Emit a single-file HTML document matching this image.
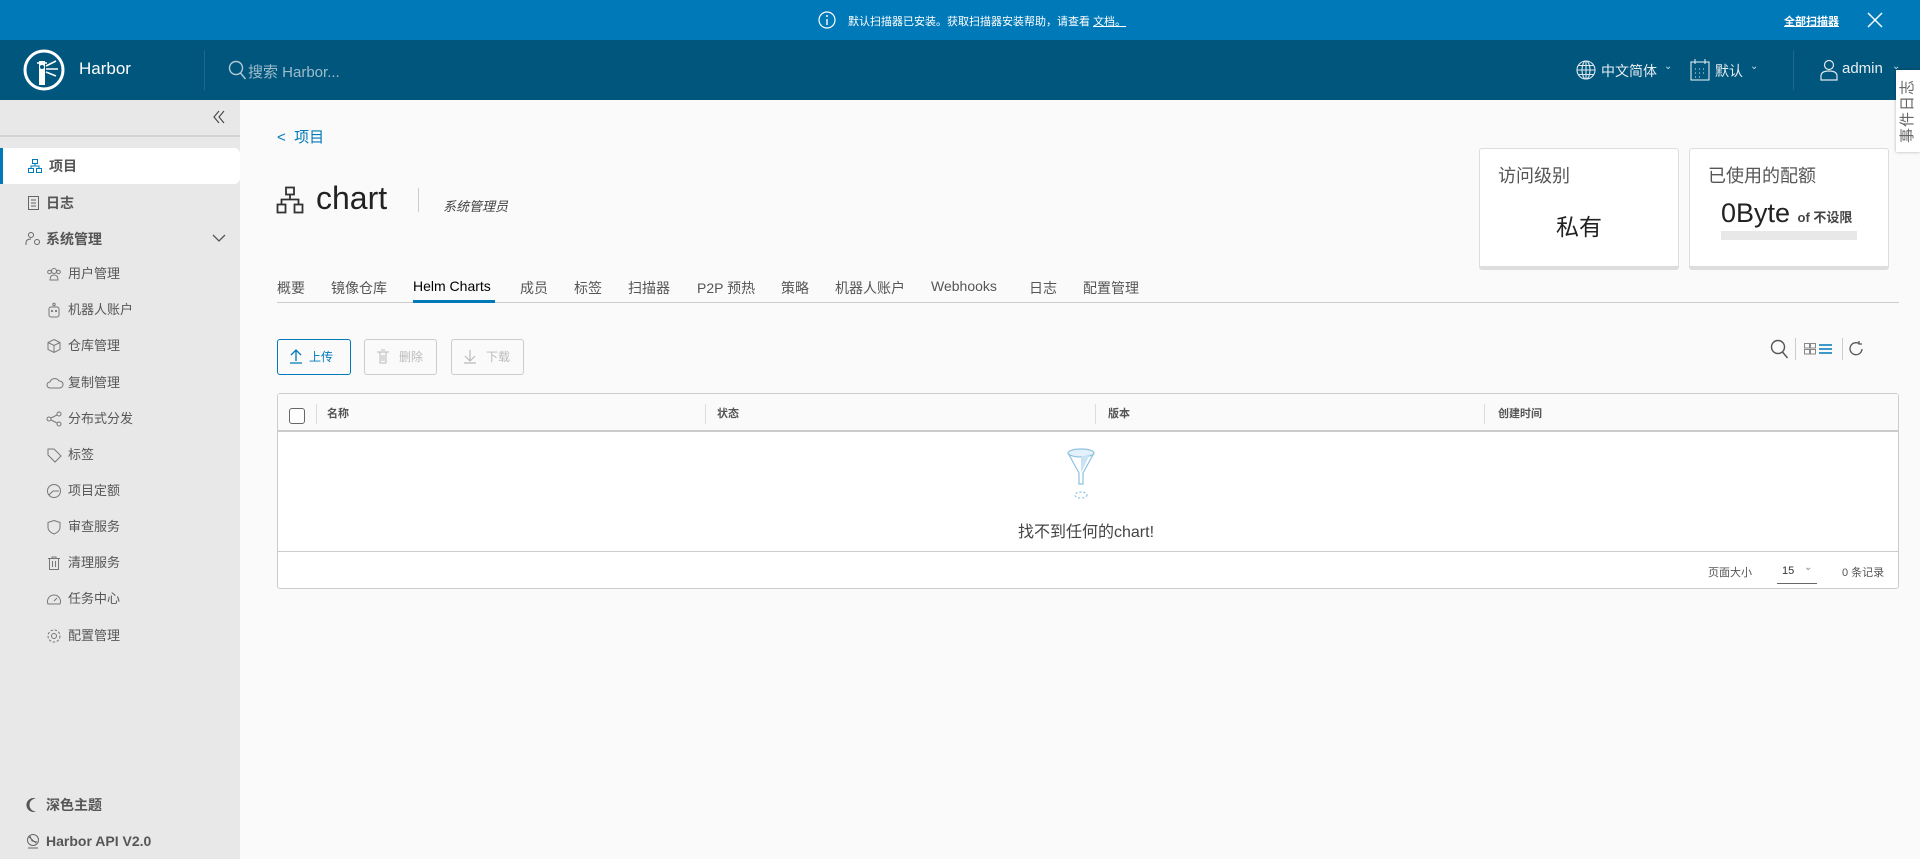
<!DOCTYPE html>
<html><head><meta charset="utf-8">
<style>
*{box-sizing:border-box;margin:0;padding:0}
body{width:1920px;height:859px;overflow:hidden;background:#fafafa;font-family:"Liberation Sans","Noto Sans CJK SC",sans-serif;color:#565656;position:relative}
.a{position:absolute;white-space:nowrap}
.banner{position:absolute;left:0;top:0;width:1920px;height:40px;background:#0079b8;color:#fff;font-size:11px}
.hdr{position:absolute;left:0;top:40px;width:1920px;height:60px;background:#00567d;color:#fff}
.side{position:absolute;left:0;top:100px;width:240px;height:759px;background:#e8e8e8}
.si{position:absolute;left:0;width:240px;height:20px;font-size:14px;color:#565656;line-height:20px}
.si svg{position:absolute;top:2px}
.tab{position:absolute;top:278px;font-size:14px;color:#565656}
.btn{position:absolute;top:339px;height:36px;border:1px solid #ccc;border-radius:3px;font-size:12px;color:#bbb;line-height:34px;padding-left:34px;background:#fafafa}
.th{position:absolute;top:405px;font-size:11px;font-weight:bold;color:#555}
.cd{position:absolute;top:404px;width:1px;height:20px;background:#ddd}
</style></head><body>

<div class="banner">
<svg class="a" style="left:818px;top:11px" width="18" height="18" viewBox="0 0 18 18"><circle cx="9" cy="9" r="8" fill="none" stroke="#fff" stroke-width="1.2"/><circle cx="9" cy="5" r="1" fill="#fff"/><path d="M9 8v6" stroke="#fff" stroke-width="1.4"/></svg>
<div class="a" style="left:848px;top:13px">默认扫描器已安装。获取扫描器安装帮助，请查看 <u>文档。</u></div>
<div class="a" style="left:1784px;top:13px;text-decoration:underline;font-weight:bold">全部扫描器</div>
<svg class="a" style="left:1866px;top:11px" width="18" height="18"><path d="M2 2L16 16M16 2L2 16" stroke="#fff" stroke-width="1.5"/></svg>
</div>

<div class="hdr">
<svg class="a" style="left:23px;top:9px" width="42" height="42" viewBox="0 0 42 42"><circle cx="21" cy="21" r="19" fill="none" stroke="#fff" stroke-width="3"/><path d="M16 12h6v24h-6z" fill="#fff"/><path d="M14 14h10M23 17l10-5M23 20h12M23 23l10 4" stroke="#fff" stroke-width="1.6"/><circle cx="19" cy="18" r="2" fill="#00567d"/></svg>
<div class="a" style="left:79px;top:19px;font-size:17px">Harbor</div>
<div class="a" style="left:204px;top:10px;width:1px;height:40px;background:#1f6a8c"></div>
<svg class="a" style="left:228px;top:20px" width="20" height="22"><circle cx="8" cy="8" r="6.5" fill="none" stroke="#b5c9d5" stroke-width="1.4"/><path d="M12.5 13l5 6" stroke="#b5c9d5" stroke-width="1.4"/></svg>
<div class="a" style="left:248px;top:21px;font-size:15px;color:#9fbccc">搜索 Harbor...</div>
<svg class="a" style="left:1576px;top:20px" width="20" height="20" viewBox="0 0 20 20" fill="none" stroke="#dfe8ee" stroke-width="1.1"><circle cx="10" cy="10" r="9"/><ellipse cx="10" cy="10" rx="4" ry="9"/><path d="M1 10h18M2.5 5.5h15M2.5 14.5h15M10 1v18"/></svg>
<div class="a" style="left:1601px;top:21px;font-size:14px;color:#e8eef2">中文简体</div>
<div class="a" style="left:1664px;top:21px;font-size:10px;color:#cfdde6">⌄</div>
<svg class="a" style="left:1690px;top:18px" width="20" height="24" fill="none" stroke="#dfe8ee" stroke-width="1.1"><rect x="1" y="4" width="18" height="18"/><path d="M5 1v5M15 1v5M5 11h1M9 11h1M13 11h1M5 15h1M9 15h1M13 15h1M5 19h1M9 19h1"/></svg>
<div class="a" style="left:1715px;top:21px;font-size:14px;color:#e8eef2">默认</div>
<div class="a" style="left:1750px;top:21px;font-size:10px;color:#cfdde6">⌄</div>
<div class="a" style="left:1793px;top:10px;width:1px;height:40px;background:#1f6a8c"></div>
<svg class="a" style="left:1820px;top:19px" width="18" height="22" fill="none" stroke="#dfe8ee" stroke-width="1.2"><circle cx="9" cy="6" r="4.5"/><path d="M1 21v-4q0-5 8-5t8 5v4z"/></svg>
<div class="a" style="left:1842px;top:20px;font-size:15px;color:#e8eef2">admin</div>
<div class="a" style="left:1892px;top:21px;font-size:10px;color:#cfdde6">⌄</div>
</div>
<div class="a" style="left:1896px;top:70px;width:24px;height:82px;background:#fff;box-shadow:0 0 3px rgba(0,0,0,.3)"></div>
<div class="a" style="left:1870px;top:101px;width:76px;height:20px;transform:rotate(-90deg);font-size:15px;color:#666;text-align:center;line-height:20px;letter-spacing:1px">事件日志</div>

<div class="side">
<svg class="a" style="left:211px;top:9px" width="16" height="16" fill="none" stroke="#444" stroke-width="1.1"><path d="M8 2L3 8l5 6M13 2L8 8l5 6"/></svg>
<div class="a" style="left:0;top:35px;width:240px;height:2px;background:#d4d4d4"></div>
<div class="a" style="left:0;top:48px;width:240px;height:36px;background:#fff;border-radius:0 6px 6px 0;border-left:3px solid #0079b8"></div>
</div>
<div class="si" style="top:156px;font-weight:bold"><svg style="left:27px" width="16" height="16" fill="none" stroke="#0079b8" stroke-width="1"><rect x="5.5" y="1.5" width="5" height="4"/><rect x="1.5" y="10.5" width="5" height="4"/><rect x="9.5" y="10.5" width="5" height="4"/><path d="M8 5.5v2.5M4 10.5V8h8v2.5"/></svg><span class="a" style="left:49px">项目</span></div>
<div class="si" style="top:193px;font-weight:bold"><svg style="left:27px" width="14" height="16" fill="none" stroke="#666" stroke-width="1"><rect x="1.5" y="1.5" width="10" height="13"/><path d="M4 5h5M4 8h5M4 11h5"/></svg><span class="a" style="left:46px">日志</span></div>
<div class="si" style="top:229px;font-weight:bold"><svg style="left:25px" width="18" height="16" fill="none" stroke="#666" stroke-width="1"><circle cx="6" cy="4" r="2.5"/><path d="M1 14v-2q0-4 5-4"/><circle cx="12" cy="11" r="2.5"/></svg><span class="a" style="left:46px">系统管理</span><svg style="left:212px;top:4px" width="14" height="10" fill="none" stroke="#555" stroke-width="1.3"><path d="M1 2l6 6 6-6"/></svg></div>
<div class="si" style="top:264px;font-size:13px"><svg style="left:46px" width="16" height="16" fill="none" stroke="#777" stroke-width="1"><circle cx="8" cy="5" r="2.5"/><circle cx="3.5" cy="6" r="1.8"/><circle cx="12.5" cy="6" r="1.8"/><path d="M4 14q0-5 4-5t4 5z"/></svg><span class="a" style="left:68px">用户管理</span></div>
<div class="si" style="top:300px;font-size:13px"><svg style="left:46px" width="16" height="16" fill="none" stroke="#777" stroke-width="1"><rect x="3" y="5" width="10" height="10" rx="2"/><circle cx="8" cy="2.5" r="1.2"/><circle cx="6" cy="9" r=".6"/><circle cx="10" cy="9" r=".6"/></svg><span class="a" style="left:68px">机器人账户</span></div>
<div class="si" style="top:336px;font-size:13px"><svg style="left:46px" width="16" height="16" fill="none" stroke="#777" stroke-width="1"><path d="M8 1.5l6 3v7l-6 3-6-3v-7zM2 4.5l6 3 6-3M8 7.5v7"/></svg><span class="a" style="left:68px">仓库管理</span></div>
<div class="si" style="top:373px;font-size:13px"><svg style="left:46px" width="18" height="16" fill="none" stroke="#777" stroke-width="1"><path d="M4 13a3 3 0 010-6 5 5 0 019-1 3.5 3.5 0 011 7z"/></svg><span class="a" style="left:68px">复制管理</span></div>
<div class="si" style="top:409px;font-size:13px"><svg style="left:46px" width="16" height="16" fill="none" stroke="#777" stroke-width="1"><circle cx="3" cy="8" r="2"/><circle cx="13" cy="3" r="2"/><circle cx="13" cy="13" r="2"/><path d="M5 7l6-3M5 9l6 3"/></svg><span class="a" style="left:68px">分布式分发</span></div>
<div class="si" style="top:445px;font-size:13px"><svg style="left:46px" width="16" height="16" fill="none" stroke="#777" stroke-width="1"><path d="M2 2h6l7 7-6 6-7-7z"/></svg><span class="a" style="left:68px">标签</span></div>
<div class="si" style="top:481px;font-size:13px"><svg style="left:46px" width="16" height="16" fill="none" stroke="#777" stroke-width="1"><circle cx="8" cy="8" r="6.5"/><path d="M3 12l4-4h6"/></svg><span class="a" style="left:68px">项目定额</span></div>
<div class="si" style="top:517px;font-size:13px"><svg style="left:46px" width="16" height="16" fill="none" stroke="#777" stroke-width="1"><path d="M8 1.5l6 2v5q0 4-6 6.5-6-2.5-6-6.5v-5z"/></svg><span class="a" style="left:68px">审查服务</span></div>
<div class="si" style="top:553px;font-size:13px"><svg style="left:46px" width="16" height="16" fill="none" stroke="#777" stroke-width="1"><path d="M2 3.5h12M6 3.5V2h4v1.5M3.5 3.5v11h9v-11M6.5 6v6M9.5 6v6"/></svg><span class="a" style="left:68px">清理服务</span></div>
<div class="si" style="top:589px;font-size:13px"><svg style="left:46px" width="16" height="16" fill="none" stroke="#777" stroke-width="1"><path d="M2 13a6.5 6.5 0 1112 0zM8 10l3-3"/></svg><span class="a" style="left:68px">任务中心</span></div>
<div class="si" style="top:626px;font-size:13px"><svg style="left:46px" width="16" height="16" fill="none" stroke="#777" stroke-width="1"><circle cx="8" cy="8" r="2.5"/><circle cx="8" cy="8" r="6" stroke-dasharray="2.5 1.6"/></svg><span class="a" style="left:68px">配置管理</span></div>
<div class="si" style="top:795px;font-weight:bold"><svg style="left:26px" width="14" height="16"><path d="M10 1.5a7 7 0 100 13A6 6 0 0110 1.5z" fill="#555"/></svg><span class="a" style="left:46px">深色主题</span></div>
<div class="si" style="top:831px;font-weight:bold"><svg style="left:25px" width="16" height="16" fill="none" stroke="#666" stroke-width="1"><circle cx="8" cy="7" r="5.5"/><path d="M4 4l7 6M3 15h10M5 3l2 5 5 1"/></svg><span class="a" style="left:46px">Harbor API V2.0</span></div>

<div class="a" style="left:277px;top:126px;font-size:15px;color:#0079b8">&lt;&nbsp;&nbsp;项目</div>
<svg class="a" style="left:276px;top:186px" width="28" height="28" fill="none" stroke="#333" stroke-width="1.8"><rect x="10" y="1.5" width="8" height="7"/><rect x="1.5" y="18.5" width="8" height="8"/><rect x="18.5" y="18.5" width="8" height="8"/><path d="M14 8.5v5M5.5 18.5v-5h17v5"/></svg>
<div class="a" style="left:316px;top:180px;font-size:32px;color:#222">chart</div>
<div class="a" style="left:418px;top:188px;width:1px;height:24px;background:#ccc"></div>
<div class="a" style="left:443px;top:196px;font-size:13px;font-style:italic;color:#444">系统管理员</div>

<div class="a" style="left:1479px;top:148px;width:200px;height:122px;background:#fff;border:1px solid #ddd;border-bottom:4px solid #ddd;border-radius:3px"></div>
<div class="a" style="left:1498px;top:162px;font-size:18px;color:#565656">访问级别</div>
<div class="a" style="left:1556px;top:208px;font-size:23px;color:#222">私有</div>
<div class="a" style="left:1689px;top:148px;width:200px;height:122px;background:#fff;border:1px solid #ddd;border-bottom:4px solid #ddd;border-radius:3px"></div>
<div class="a" style="left:1708px;top:162px;font-size:18px;color:#565656">已使用的配额</div>
<div class="a" style="left:1721px;top:198px;font-size:27px;color:#222">0Byte <span style="font-size:13px;font-weight:bold;color:#444">of 不设限</span></div>
<div class="a" style="left:1721px;top:231px;width:136px;height:9px;background:#e8e8e8"></div>

<div class="tab" style="left:277px">概要</div>
<div class="tab" style="left:331px">镜像仓库</div>
<div class="tab" style="left:413px;color:#000">Helm Charts</div>
<div class="tab" style="left:520px">成员</div>
<div class="tab" style="left:574px">标签</div>
<div class="tab" style="left:628px">扫描器</div>
<div class="tab" style="left:697px">P2P 预热</div>
<div class="tab" style="left:781px">策略</div>
<div class="tab" style="left:835px">机器人账户</div>
<div class="tab" style="left:931px">Webhooks</div>
<div class="tab" style="left:1029px">日志</div>
<div class="tab" style="left:1083px">配置管理</div>
<div class="a" style="left:277px;top:302px;width:1622px;height:1px;background:#ccc"></div>
<div class="a" style="left:413px;top:300px;width:82px;height:3px;background:#0079b8"></div>

<div class="btn" style="left:277px;width:74px;border-color:#0079b8;color:#0079b8;padding-left:31px">上传</div>
<svg class="a" style="left:289px;top:348px" width="14" height="16" fill="none" stroke="#0079b8" stroke-width="1.3"><path d="M7 13V2M2 7l5-5 5 5M1 15h12"/></svg>
<div class="btn" style="left:364px;width:73px">删除</div>
<svg class="a" style="left:376px;top:349px" width="14" height="16" fill="none" stroke="#bbb" stroke-width="1"><path d="M1 3h12M4 3v11h6V3M5 1h4M6 6v6M8 6v6"/></svg>
<div class="btn" style="left:451px;width:73px">下载</div>
<svg class="a" style="left:463px;top:348px" width="14" height="16" fill="none" stroke="#bbb" stroke-width="1.2"><path d="M7 2v11M2 8l5 5 5-5M1 15h12"/></svg>

<svg class="a" style="left:1770px;top:339px" width="20" height="22" fill="none" stroke="#555" stroke-width="1.4"><circle cx="8" cy="8" r="6.5"/><path d="M12.5 13l5 6"/></svg>
<div class="a" style="left:1795px;top:338px;width:1px;height:22px;background:#ccc"></div>
<svg class="a" style="left:1804px;top:343px" width="30" height="12" fill="none" stroke-width="1"><rect x=".5" y=".5" width="5" height="4.5" stroke="#888"/><rect x="6.5" y=".5" width="5" height="4.5" stroke="#888"/><rect x=".5" y="6.5" width="5" height="4.5" stroke="#888"/><rect x="6.5" y="6.5" width="5" height="4.5" stroke="#888"/><path d="M15 2h13M15 6h13M15 10h13" stroke="#0079b8" stroke-width="1.5"/></svg>
<div class="a" style="left:1842px;top:338px;width:1px;height:22px;background:#ccc"></div>
<svg class="a" style="left:1849px;top:340px" width="16" height="18" fill="none" stroke="#555" stroke-width="1.3"><path d="M13 9A6 6 0 1110 3.5M10 1v3h3"/></svg>

<div class="a" style="left:277px;top:393px;width:1622px;height:196px;background:#fff;border:1px solid #ccc;border-radius:3px"></div>
<div class="a" style="left:278px;top:394px;width:1620px;height:36px;background:#fafafa"></div>
<div class="a" style="left:278px;top:430px;width:1620px;height:2px;background:#ccc"></div>
<div class="a" style="left:289px;top:408px;width:16px;height:16px;border:1px solid #666;border-radius:3px;background:#fff"></div>
<div class="cd" style="left:316px"></div><div class="cd" style="left:705px"></div><div class="cd" style="left:1095px"></div><div class="cd" style="left:1484px"></div>
<div class="th" style="left:327px">名称</div><div class="th" style="left:717px">状态</div><div class="th" style="left:1108px">版本</div><div class="th" style="left:1498px">创建时间</div>
<svg class="a" style="left:1064px;top:448px" width="34" height="52" fill="none" stroke="#8cc1e0" stroke-width="1.2"><ellipse cx="17" cy="5" rx="13" ry="4" fill="#e3f1fa"/><path d="M4 5l11 20v11h4V25L30 5"/><path d="M17 9l9-3-9 19z" fill="#c9e3f3" stroke="none"/><ellipse cx="17" cy="47" rx="6" ry="3" stroke-dasharray="2 2"/></svg>
<div class="a" style="left:1018px;top:518px;font-size:16px;color:#444">找不到任何的chart!</div>
<div class="a" style="left:278px;top:551px;width:1620px;height:1px;background:#ccc"></div>
<div class="a" style="left:1708px;top:564px;font-size:11px;color:#555">页面大小</div>
<div class="a" style="left:1782px;top:565px;font-size:11px;color:#333">15</div>
<div class="a" style="left:1804px;top:562px;font-size:10px;color:#888">⌄</div>
<div class="a" style="left:1777px;top:583px;width:40px;height:1px;background:#666"></div>
<div class="a" style="left:1842px;top:564px;font-size:11px;color:#555">0 条记录</div>
</body></html>
